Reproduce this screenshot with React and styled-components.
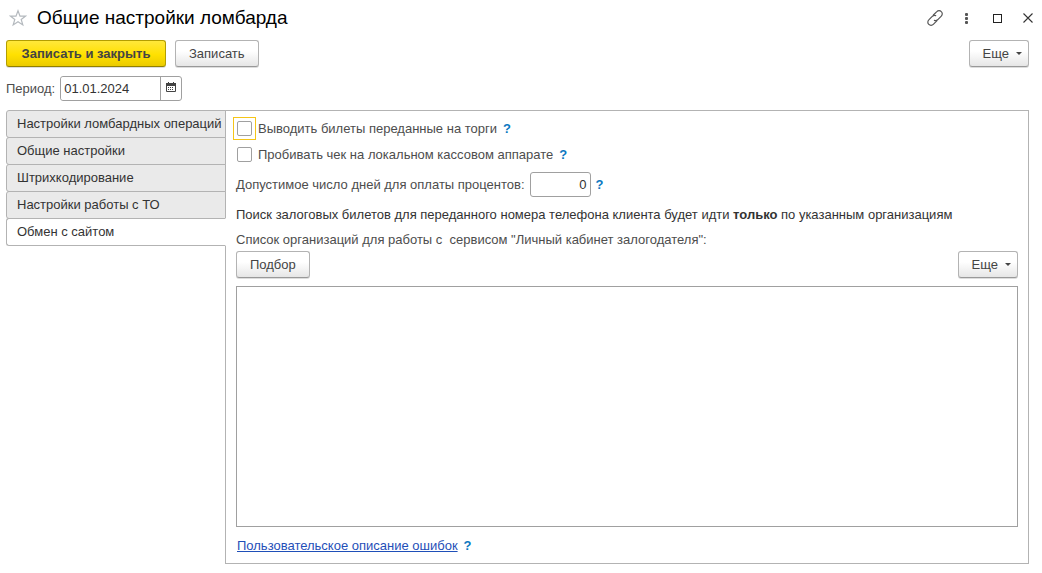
import React, { useState } from "react";
import styled, { createGlobalStyle } from "styled-components";

const GlobalStyle = createGlobalStyle`
    * {
        box-sizing: border-box;
    }
    body {
        margin: 0;
        background: #fff;
        color: #4d4d4d;
        font-family: "Liberation Sans", Arial, sans-serif;
        font-size: 13px;
        line-height: 16px;
    }
    button, input {
        font: inherit;
        color: inherit;
    }
`

const Page = styled.div`
    display: flex;
    flex-direction: column;
    min-height: 100vh;
    padding: 0 13px 9px 6px;
`

const TitleBar = styled.header`
    display: flex;
    align-items: center;
    height: 35px;
    margin-right: -9px;
`

const Title = styled.h1`
    flex: 1;
    margin: 0 0 0 7px;
    font-size: 19px;
    line-height: 24px;
    font-weight: normal;
    color: #000;
`

const WindowButtons = styled.div`
    display: flex;
    gap: 11px;
`

const IconButton = styled.button`
    display: flex;
    align-items: center;
    justify-content: center;
    width: ${props => props.$width || 20}px;
    height: ${props => props.$height || 24}px;
    padding: 0;
    border: 0;
    background: none;
    cursor: pointer;
`

const Toolbar = styled.div`
    display: flex;
    gap: 9px;
    margin-top: ${props => props.$top}px;
`

const Button = styled.button`
    height: 27px;
    padding: 0 13px;
    border: 1px solid #b3b3b3;
    border-bottom-color: #999;
    border-radius: 3px;
    background: linear-gradient(#fff 40%, #e6e6e6);
    box-shadow: 0 1px 0 #ddd;
    color: #444;
    font-size: 13px;
    cursor: pointer;
`

const PrimaryButton = styled(Button)`
    min-width: 160px;
    border-color: #b39e00;
    border-bottom-color: #918000;
    background: linear-gradient(#ffe83b, #ffe000 55%, #ebcb00);
    font-weight: bold;
`

const MoreButton = styled(Button)`
    display: flex;
    align-items: center;
    gap: 7px;
    margin-left: auto;
    padding-right: 6px;
`

const Caret = styled.span`
    border: 3px solid transparent;
    border-top-color: #444;
    border-bottom: 0;
`

const Field = styled.div`
    display: flex;
    align-items: center;
    gap: 5px;
    margin-top: ${props => props.$top}px;
`

const DateBox = styled.div`
    display: flex;
    width: 122px;
    height: 25px;
    border: 1px solid #a0a0a0;
    border-radius: 3px;
`

const DateInput = styled.input`
    flex: 1;
    min-width: 0;
    padding: 0 3px;
    border: 0;
    border-right: 1px solid #a0a0a0;
    border-radius: 3px 0 0 3px;
    outline: none;
    color: #333;
`

const NumberInput = styled.input`
    width: 61px;
    height: 25px;
    padding: 0 3px;
    border: 1px solid #a0a0a0;
    border-radius: 3px;
    outline: none;
    color: #333;
    text-align: right;
`

const Body = styled.div`
    display: flex;
    flex: 1;
    margin-top: 9px;
`

const Tabs = styled.div`
    display: flex;
    flex-direction: column;
    width: 220px;
    margin-right: -1px;
    z-index: 1;
`

const Tab = styled.button`
    height: 28px;
    margin-bottom: -1px;
    padding: 0 0 0 10px;
    border: 1px solid #b3b3b3;
    border-right-color: ${props => props.$active ? "#fff" : "#b3b3b3"};
    border-radius: 3px 0 0 3px;
    background: ${props => props.$active ? "#fff" : "#eaeaea"};
    color: #333;
    text-align: left;
    white-space: nowrap;
    cursor: pointer;
`

const Panel = styled.section`
    display: flex;
    flex: 1;
    flex-direction: column;
    min-width: 0;
    padding: 10px 10px 9px;
    border: 1px solid #b3b3b3;
`

const Checks = styled.div`
    display: flex;
    flex-direction: column;
    gap: 10px;
    padding-left: 1px;
`

const CheckRow = styled.div`
    display: flex;
    align-items: flex-start;
    gap: 6px;
`

const CheckFrame = styled.span`
    display: flex;
    &:focus-within {
        outline: 1px solid #f5c518;
        outline-offset: 3px;
    }
`

const Checkbox = styled.input`
    appearance: none;
    width: 15px;
    height: 15px;
    margin: 0;
    border: 1px solid #a0a0a0;
    border-radius: 2px;
    outline: none;
    background: #fff;
    &:checked {
        background: #4d4d4d;
        box-shadow: inset 0 0 0 3px #fff;
    }
`

const Help = styled.button`
    padding: 0;
    border: 0;
    background: none;
    color: #0b78c1;
    font-size: 13px;
    font-weight: bold;
    cursor: pointer;
`

const Note = styled.p`
    margin: 10px 0 9px;
    color: #333;
`

const ListLabel = styled.div`
    white-space: pre-wrap;
`

const List = styled.div`
    flex: 1;
    min-height: 120px;
    margin-top: 8px;
    border: 1px solid #a0a0a0;
`

const Footer = styled.div`
    display: flex;
    gap: 6px;
    margin-top: 11px;
    padding-left: 1px;
`

const ErrorLink = styled.a`
    color: #1f4fb8;
    text-decoration: underline;
`

const tabs = [
    "Настройки ломбардных операций",
    "Общие настройки",
    "Штрихкодирование",
    "Настройки работы с ТО",
    "Обмен с сайтом",
]

function HelpMark() {
    return <Help type="button" aria-label="Справка">?</Help>
}

function StarIcon() {
    return (
        <svg width="18" height="18" viewBox="0 0 18 18" fill="none" stroke="#b4b9be" strokeWidth="1.2">
            <path d="M9 1.8l2 5.3h5.7l-4.5 3.4 1.6 5.4L9 12.7l-4.8 3.2 1.6-5.4-4.5-3.4H7z" />
        </svg>
    )
}

function LinkIcon() {
    return (
        <svg width="18" height="18" viewBox="0 0 18 18" fill="none" stroke="#555" strokeWidth="1.2" strokeLinecap="round">
            <path d="M7.4 6l3.4-3.4a3.1 3.1 0 0 1 4.5 0 3.1 3.1 0 0 1 0 4.5l-3.7 3.7a3.1 3.1 0 0 1-3.2.6" />
            <path d="M10.8 11.9l-3.5 3.5a3.1 3.1 0 0 1-4.5 0 3.1 3.1 0 0 1 0-4.5l3.7-3.7a3.1 3.1 0 0 1 3.2-.6" />
        </svg>
    )
}

function DotsIcon() {
    return (
        <svg width="4" height="12" viewBox="0 0 4 12" fill="#555">
            <rect x="1" y="1" width="3" height="3" rx="1" />
            <rect x="1" y="5" width="3" height="3" rx="1" />
            <rect x="1" y="9" width="3" height="3" rx="1" />
        </svg>
    )
}

function MaximizeIcon() {
    return (
        <svg width="10" height="10" viewBox="0 0 10 10" fill="none" stroke="#222">
            <rect x="1.5" y="1.5" width="8" height="8" />
        </svg>
    )
}

function CloseIcon() {
    return (
        <svg width="12" height="12" viewBox="0 0 12 12" stroke="#333" strokeWidth="1.1">
            <path d="M1.5 1.5l9 9M10.5 1.5l-9 9" />
        </svg>
    )
}

function CalendarIcon() {
    return (
        <svg width="10" height="11" viewBox="0 0 10 11">
            <path d="M.5 1.5h9v8h-9z" fill="#fff" stroke="#444" />
            <path d="M0 1h10v3H0zM2 0h1v2H2zM7 0h1v2H7z" fill="#444" />
            <path d="M2 5.5h6M2 7.5h6" stroke="#444" strokeDasharray="1 1" />
        </svg>
    )
}

function App() {
    const [active, setActive] = useState(4)
    const [period, setPeriod] = useState("01.01.2024")
    const [days, setDays] = useState("0")

    return (
        <Page>
            <GlobalStyle />
            <TitleBar>
                <IconButton $width={24} aria-label="В избранное"><StarIcon /></IconButton>
                <Title>Общие настройки ломбарда</Title>
                <WindowButtons>
                    <IconButton aria-label="Получить ссылку"><LinkIcon /></IconButton>
                    <IconButton aria-label="Меню"><DotsIcon /></IconButton>
                    <IconButton aria-label="Развернуть"><MaximizeIcon /></IconButton>
                    <IconButton aria-label="Закрыть"><CloseIcon /></IconButton>
                </WindowButtons>
            </TitleBar>

            <Toolbar $top={5}>
                <PrimaryButton type="button">Записать и закрыть</PrimaryButton>
                <Button type="button">Записать</Button>
                <MoreButton type="button">Еще<Caret /></MoreButton>
            </Toolbar>

            <Field $top={9}>
                <label htmlFor="period">Период:</label>
                <DateBox>
                    <DateInput id="period" value={period} onChange={e => setPeriod(e.target.value)} />
                    <IconButton type="button" $height={21} aria-label="Выбрать дату"><CalendarIcon /></IconButton>
                </DateBox>
            </Field>

            <Body>
                <Tabs role="tablist">
                    {tabs.map((name, i) => (
                        <Tab
                            key={name}
                            type="button"
                            role="tab"
                            aria-selected={i === active}
                            $active={i === active}
                            onClick={() => setActive(i)}
                        >
                            {name}
                        </Tab>
                    ))}
                </Tabs>

                <Panel role="tabpanel">
                    <Checks>
                        <CheckRow>
                            <CheckFrame><Checkbox type="checkbox" id="auction" autoFocus /></CheckFrame>
                            <label htmlFor="auction">Выводить билеты переданные на торги</label>
                            <HelpMark />
                        </CheckRow>
                        <CheckRow>
                            <CheckFrame><Checkbox type="checkbox" id="receipt" /></CheckFrame>
                            <label htmlFor="receipt">Пробивать чек на локальном кассовом аппарате</label>
                            <HelpMark />
                        </CheckRow>
                    </Checks>
                    <Field $top={9}>
                        <label htmlFor="days">Допустимое число дней для оплаты процентов:</label>
                        <NumberInput id="days" value={days} onChange={e => setDays(e.target.value)} />
                        <HelpMark />
                    </Field>
                    <Note>
                        Поиск залоговых билетов для переданного номера телефона клиента будет
                        идти <b>только</b> по указанным организациям
                    </Note>
                    <ListLabel id="orgs">{'Список организаций для работы с  сервисом "Личный кабинет залогодателя":'}</ListLabel>
                    <Toolbar $top={3}>
                        <Button type="button">Подбор</Button>
                        <MoreButton type="button">Еще<Caret /></MoreButton>
                    </Toolbar>
                    <List role="listbox" aria-labelledby="orgs" />
                    <Footer>
                        <ErrorLink href="#errors">Пользовательское описание ошибок</ErrorLink>
                        <HelpMark />
                    </Footer>
                </Panel>
            </Body>
        </Page>
    )
}

export default App;
